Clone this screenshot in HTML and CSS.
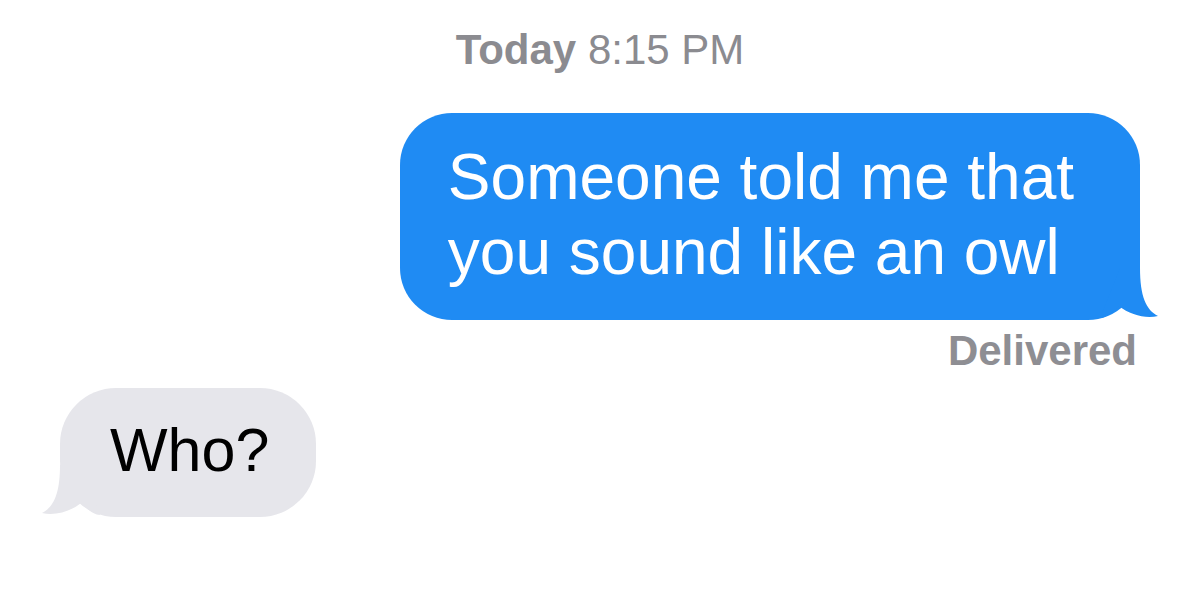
FILE: index.html
```html
<!DOCTYPE html>
<html lang="en">
<head>
<meta charset="utf-8">
<title>Messages</title>
<link rel="stylesheet" href="styles.css">
</head>
<body>
<main class="thread">
  <div class="timestamp"><b>Today</b> 8:15 PM</div>
  <div class="row row-out">
    <div class="bubble bubble-out">
      Someone told me that<br>you sound like an owl
      <svg class="tail tail-out" width="60" height="52" viewBox="0 0 60 52"><path d="M20 0 L40 0 C40 28 46 42 58 48 C46 51 30 47 19 38 C13 44 6 50 0 50 Z" fill="#1f8bf3"/></svg>
    </div>
  </div>
  <div class="status">Delivered</div>
  <div class="row row-in">
    <div class="bubble bubble-in">
      Who?
      <svg class="tail tail-in" width="60" height="52" viewBox="0 0 60 52"><path d="M40 0 L20 0 C20 28 14 42 2 48 C14 51 30 47 41 38 C47 44 54 50 60 50 Z" fill="#e6e6eb"/></svg>
    </div>
  </div>
</main>
</body>
</html>
```

FILE: styles.css
```css
html, body {
  margin: 0;
  padding: 0;
  background: #ffffff;
}

body {
  width: 1200px;
  height: 601px;
  overflow: hidden;
  font-family: "Liberation Sans", Arial, Helvetica, sans-serif;
}

.thread {
  display: flex;
  flex-direction: column;
}

.timestamp {
  padding-top: 26px;
  text-align: center;
  font-size: 42px;
  line-height: 48px;
  color: #8b8b90;
}

.timestamp b {
  font-weight: 700;
}

.row {
  display: flex;
}

.row-out {
  justify-content: flex-end;
  padding-right: 60px;
  margin-top: 39px;
}

.row-in {
  justify-content: flex-start;
  padding-left: 60px;
  margin-top: 13px;
}

.bubble {
  position: relative;
  line-height: 75px;
  white-space: nowrap;
}

.bubble-out {
  font-size: 64px;
  background: #1f8bf3;
  color: #ffffff;
  padding: 27px 66px 30px 48px;
  border-radius: 52px;
}

.bubble-in {
  font-size: 61px;
  background: #e6e6eb;
  color: #000000;
  padding: 25px 47px 29px 50px;
  border-radius: 56px;
}

.tail {
  position: absolute;
  bottom: 0;
  display: block;
}

.tail-out {
  right: -20px;
}

.tail-in {
  left: -20px;
}

.status {
  margin-top: 7px;
  padding-right: 63px;
  text-align: right;
  font-size: 42px;
  line-height: 48px;
  font-weight: 700;
  color: #8e8e93;
}
```
